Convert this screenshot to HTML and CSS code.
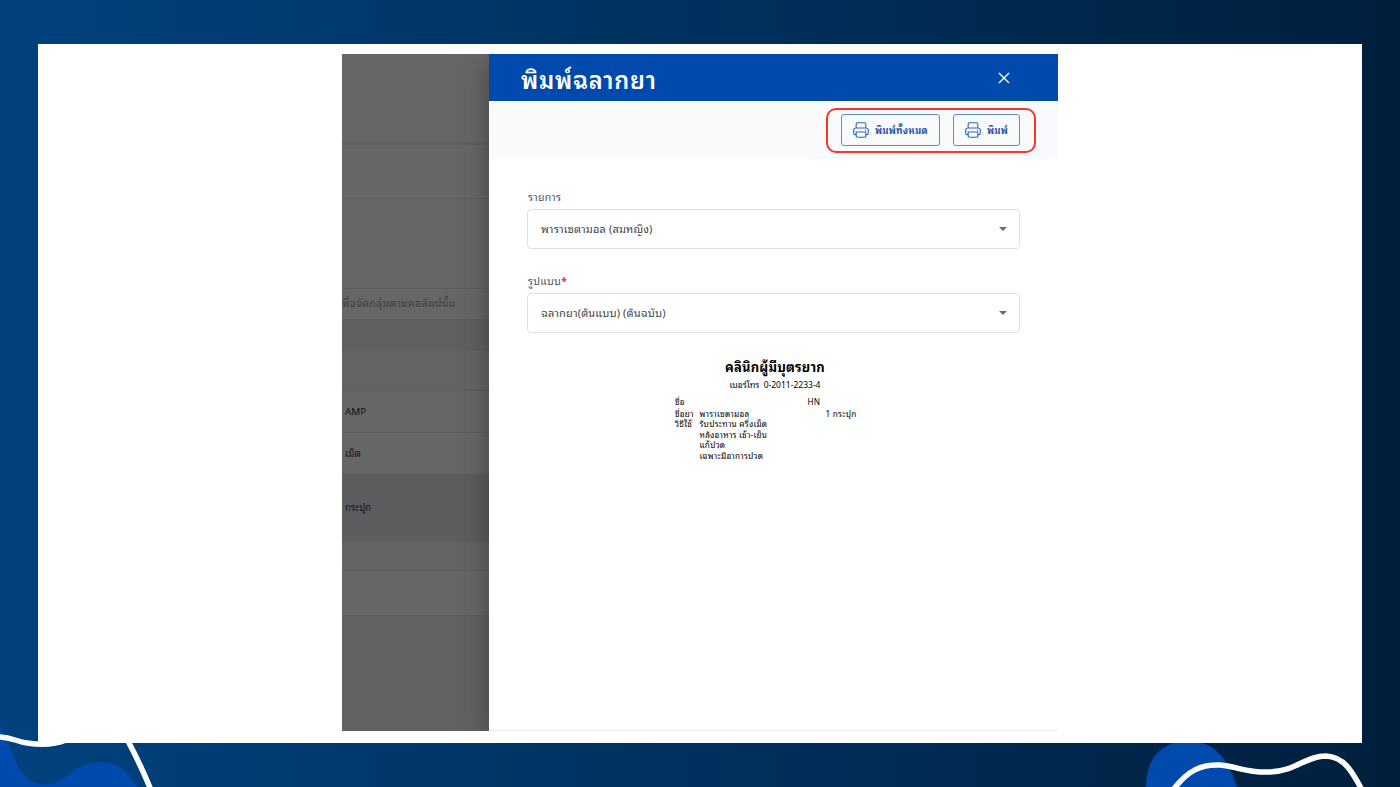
FILE: index.html
```html
<!DOCTYPE html>
<html lang="th">
<head>
    <meta charset="UTF-8">
    <meta name="viewport" content="width=device-width, initial-scale=1.0">
    <title>พิมพ์ฉลากยา</title>
    <link rel="stylesheet" href="styles.css">
</head>
<body>

    <svg class="waves" viewBox="0 0 1400 787">
        <path class="blob" d="M0 727C8 739 12 755 19 768C30 788 50 789 66 776C85 760 108 758 124 770Q132 777 137 787H0Z"/>
        <path class="blob" d="M1146 787C1146 758 1162 741 1188 741C1218 741 1229 764 1237 787Z"/>
    </svg>

    <div class="slide">
        <div class="screen">
            <div class="backdrop">
                <div class="row row-top"></div>
                <div class="row row-title"></div>
                <div class="row row-space"></div>
                <div class="row row-group"><span>พื่อจัดกลุ่มตามคอลัมน์นั้น</span></div>
                <div class="row row-head"></div>
                <div class="row row-filter"></div>
                <div class="row row-item">AMP</div>
                <div class="row row-item">เม็ด</div>
                <div class="row row-selected">กระปุก</div>
                <div class="row row-footer"></div>
                <div class="row row-pager"></div>
                <div class="row row-rest"></div>
            </div>

            <div class="drawer">
                <div class="header">
                    <h1>พิมพ์ฉลากยา</h1>
                    <svg class="close" viewBox="0 0 12 12"><path d="M1 1L11 11M11 1L1 11"/></svg>
                </div>
                <div class="toolbar">
                    <div class="highlight">
                        <button class="btn btn-all">
                            <svg class="printer" viewBox="0 0 16 16"><path d="M3.2 6V2Q3.2 .8 4.4 .8H11.6Q12.8 .8 12.8 2V6M3 12.6H2Q.7 12.6 .7 11.3V8Q.7 6 2.7 6H13.3Q15.3 6 15.3 8V11.3Q15.3 12.6 14 12.6H13M3.2 10H12.8V14Q12.8 15.2 11.6 15.2H4.4Q3.2 15.2 3.2 14ZM12 8H13.2"/></svg>
                            <span>พิมพ์ทั้งหมด</span>
                        </button>
                        <button class="btn btn-one">
                            <svg class="printer" viewBox="0 0 16 16"><path d="M3.2 6V2Q3.2 .8 4.4 .8H11.6Q12.8 .8 12.8 2V6M3 12.6H2Q.7 12.6 .7 11.3V8Q.7 6 2.7 6H13.3Q15.3 6 15.3 8V11.3Q15.3 12.6 14 12.6H13M3.2 10H12.8V14Q12.8 15.2 11.6 15.2H4.4Q3.2 15.2 3.2 14ZM12 8H13.2"/></svg>
                            <span>พิมพ์</span>
                        </button>
                    </div>
                </div>
                <div class="form">
                    <label>รายการ</label>
                    <div class="select"><span>พาราเซตามอล (สมหญิง)</span><i class="caret"></i></div>
                    <label>รูปแบบ<b>*</b></label>
                    <div class="select"><span>ฉลากยา(ต้นแบบ) (ต้นฉบับ)</span><i class="caret"></i></div>
                </div>
                <div class="sticker">
                    <h2>คลินิกผู้มีบุตรยาก</h2>
                    <p class="phone">เบอร์โทร&nbsp; 0-2011-2233-4</p>
                    <div class="line line-name"><span class="key">ชื่อ</span><span class="hn">HN</span></div>
                    <div class="line line-drug"><span class="key">ชื่อยา</span><span class="val">พาราเซตามอล</span><span class="qty">1 กระปุก</span></div>
                    <div class="line"><span class="key">วิธีใช้</span><span class="val">รับประทาน ครึ่งเม็ด</span></div>
                    <div class="line"><span class="key"></span><span class="val">หลังอาหาร เช้า-เย็น</span></div>
                    <div class="line"><span class="key"></span><span class="val">แก้ปวด</span></div>
                    <div class="line"><span class="key"></span><span class="val">เฉพาะมีอาการปวด</span></div>
                </div>
            </div>
        </div>
    </div>

    <svg class="waves" viewBox="0 0 1400 787">
        <path class="stroke" d="M-4 737C10 736 17 742 27 743C40 745 54 745 66 740M128 741C137 758 144 773 151 790"/>
        <path class="stroke" d="M1173 790C1188 770 1202 764 1220 765C1240 767 1246 773 1270 772C1296 771 1306 756 1326 756C1345 757 1353 773 1362 790"/>
    </svg>

</body>
</html>
```
FILE: styles.css
```css
* {
    box-sizing: border-box;
}
body {
    margin: 0;
    height: 787px;
    padding: 44px 38px;
    overflow: hidden;
    position: relative;
    font-family: Tahoma, "Noto Sans Thai Looped", "Noto Sans", sans-serif;
    background: linear-gradient(90deg, #00427f, #001f3d);
}
.waves {
    position: absolute;
    left: 0;
    top: 0;
    width: 1400px;
    height: 787px;
}
.blob {
    fill: #004aad;
}
.stroke {
    fill: none;
    stroke: #fff;
    stroke-width: 5.5;
}
.slide {
    position: relative;
    width: 1324px;
    height: 699px;
    padding: 10px 304px 0;
    background: #fff;
}
.screen {
    display: flex;
    width: 716px;
    height: 677px;
    overflow: hidden;
}
h1, h2, p {
    margin: 0;
}
span, h1, h2, p, label {
    white-space: nowrap;
}

/* dimmed page behind the drawer */
.backdrop {
    width: 147px;
    display: flex;
    flex-direction: column;
    background: #666;
    color: #111;
}
.row {
    display: flex;
    align-items: center;
    padding-left: 3px;
    border-bottom: 1px solid #5d5e60;
    font-size: 9.5px;
}
.row-top {
    height: 91px;
    border-bottom: 3px solid #5c5f63;
}
.row-title { height: 54px; }
.row-space { height: 90px; }
.row-group {
    height: 31px;
    padding: 0 0 3px;
    font-size: 10.5px;
    letter-spacing: 0.35px;
    color: #3c3e42;
}
.row-head {
    height: 31px;
    background: #606060;
}
.row-filter {
    height: 40px;
    background: #626564;
}
.row-item {
    height: 42px;
    padding-bottom: 3px;
    font-size: 9.8px;
}
.row-selected {
    height: 67px;
    padding-bottom: 3px;
    background: #5c5d5f;
}
.row-footer {
    height: 29px;
    background: #636563;
}
.row-pager { height: 45px; }
.row-rest {
    flex: 1;
    border: 0;
    background: #616264;
}

/* drawer */
.drawer {
    width: 569px;
    background: #fff;
    border-bottom: 1px solid #e8eff5;
    box-shadow: 0 8px 26px rgba(0, 0, 0, 0.35);
}
.header {
    height: 47px;
    padding: 0 48px 0 32px;
    display: flex;
    align-items: center;
    justify-content: space-between;
    background: #004aad;
    color: #fff;
}
h1 {
    padding-top: 2px;
    font-size: 23.5px;
    line-height: 30px;
    font-weight: 600;
    letter-spacing: 0.8px;
}
.close {
    width: 12px;
    height: 12px;
    fill: none;
    stroke: #fff;
    stroke-width: 1.4;
}
.toolbar {
    height: 58px;
    padding: 7px 22px 0 0;
    display: flex;
    justify-content: flex-end;
    background: #f8fafc;
}
.highlight {
    width: 210px;
    height: 45px;
    padding: 4px 13px;
    display: flex;
    gap: 13px;
    border: 2.5px solid #ff3131;
    border-radius: 10px;
}
.btn {
    height: 32px;
    padding: 0 0 0 11px;
    display: flex;
    flex: none;
    align-items: center;
    gap: 6px;
    border: 1px solid #5f8ccc;
    border-radius: 3px;
    background: #f8fafc;
    color: #1f54ab;
    font-family: inherit;
    font-size: 9.5px;
    font-weight: bold;
    letter-spacing: 0.2px;
}
.btn span { padding-bottom: 2px; }
.btn-all { width: 99px; }
.btn-one { width: 67px; }
.printer {
    width: 16px;
    height: 16px;
    flex: none;
    fill: none;
    stroke: #2f66b8;
    stroke-width: 1.1;
}
.form {
    padding: 30px 38px 0;
}
label {
    display: block;
    height: 20px;
    padding-left: 1px;
    line-height: 16px;
    font-size: 10.5px;
    letter-spacing: 0.3px;
    color: #4b5563;
}
label b {
    color: #ef2b2b;
}
.select {
    height: 40px;
    margin-bottom: 24px;
    padding: 0 12px 0 13px;
    display: flex;
    align-items: center;
    justify-content: space-between;
    border: 1px solid #d8e2ec;
    border-radius: 4px;
    font-size: 11px;
    letter-spacing: 0.15px;
    color: #444;
}
.select span { padding-bottom: 2px; }
.caret {
    border: 4px solid transparent;
    border-top-color: #6b6b6b;
    border-bottom: 0;
}

/* medicine label preview */
.sticker {
    width: 200px;
    margin: 5px 0 0 186px;
    color: #000;
    font-size: 8.2px;
    letter-spacing: 0.25px;
}
h2 {
    text-align: center;
    font-size: 13px;
    line-height: 19px;
    letter-spacing: 0.2px;
}
.phone {
    text-align: center;
    font-size: 8.5px;
    line-height: 16px;
    letter-spacing: 0;
}
.line {
    display: flex;
    height: 10.6px;
    line-height: 10.6px;
}
.line-name {
    height: 12px;
    margin-top: 4.5px;
}
.key { width: 24.5px; }
.val { width: 126px; }
.hn { margin-left: 108px; }
```
